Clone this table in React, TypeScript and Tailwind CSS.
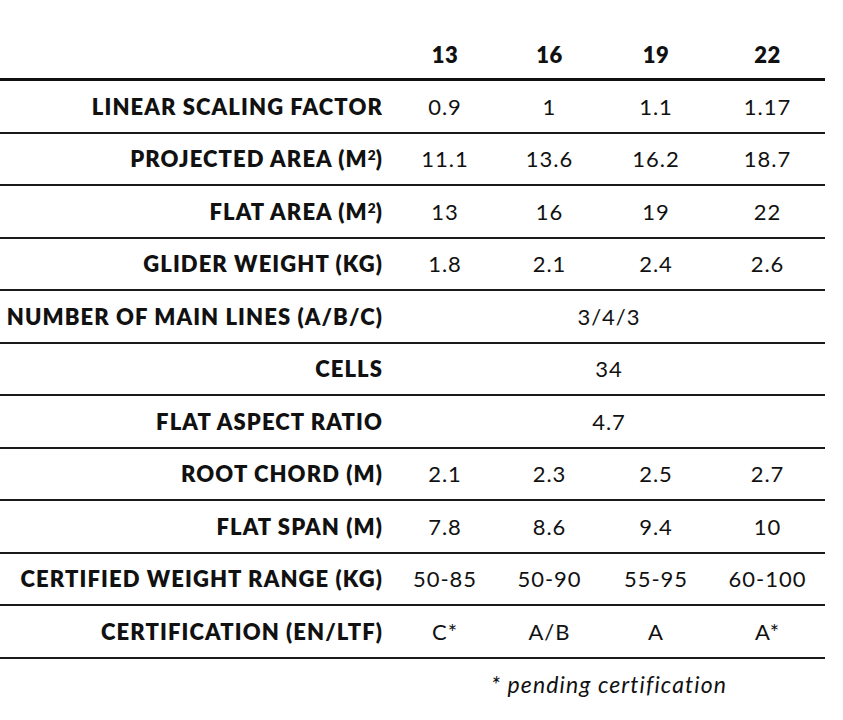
import React from "react";

type Row = { label: React.ReactNode; values: string[] | string };

const Sup = () => <sup className="text-[0.62em] tracking-normal">2</sup>;

const rows: Row[] = [
  { label: "LINEAR SCALING FACTOR", values: ["0.9", "1", "1.1", "1.17"] },
  { label: <>PROJECTED AREA (M<Sup />)</>, values: ["11.1", "13.6", "16.2", "18.7"] },
  { label: <>FLAT AREA (M<Sup />)</>, values: ["13", "16", "19", "22"] },
  { label: "GLIDER WEIGHT (KG)", values: ["1.8", "2.1", "2.4", "2.6"] },
  { label: "NUMBER OF MAIN LINES (A/B/C)", values: "3/4/3" },
  { label: "CELLS", values: "34" },
  { label: "FLAT ASPECT RATIO", values: "4.7" },
  { label: "ROOT CHORD (M)", values: ["2.1", "2.3", "2.5", "2.7"] },
  { label: "FLAT SPAN (M)", values: ["7.8", "8.6", "9.4", "10"] },
  { label: "CERTIFIED WEIGHT RANGE (KG)", values: ["50-85", "50-90", "55-95", "60-100"] },
  { label: "CERTIFICATION (EN/LTF)", values: ["C*", "A/B", "A", "A*"] },
];

const grid = "grid grid-cols-[393px_104px_105px_108px_115px]";

export default function App() {
  return (
    <div className="w-[843px] h-[720px] bg-white text-[#111]" style={{ fontFamily: "Lato, 'Open Sans', sans-serif" }}>
      <div className="w-[825px]">
        <div className={`${grid} h-[81px] pt-[30px] items-center border-b-[3px] border-[#111] text-[22px] font-extrabold tracking-[0.5px]`}>
          <div />
          <div className="text-center">13</div>
          <div className="text-center">16</div>
          <div className="text-center">19</div>
          <div className="text-center">22</div>
        </div>
        {rows.map((r, i) => (
          <div key={i} className={`${grid} h-[52.5px] items-center border-b-2 border-[#1a1a1a] text-[22px] tracking-[1px]`}>
            <div className="text-right pr-[10px] font-extrabold whitespace-nowrap tracking-[1.1px]">{r.label}</div>
            {Array.isArray(r.values) ? (
              r.values.map((v, j) => (
                <div key={j} className="text-center">{v}</div>
              ))
            ) : (
              <div className="col-span-4 text-center">{r.values}</div>
            )}
          </div>
        ))}
        <div className={`${grid} pt-[8px]`}>
          <div />
          <div className="col-span-4 text-center italic text-[23px] tracking-[1.1px]">* pending certification</div>
        </div>
      </div>
    </div>
  );
}
